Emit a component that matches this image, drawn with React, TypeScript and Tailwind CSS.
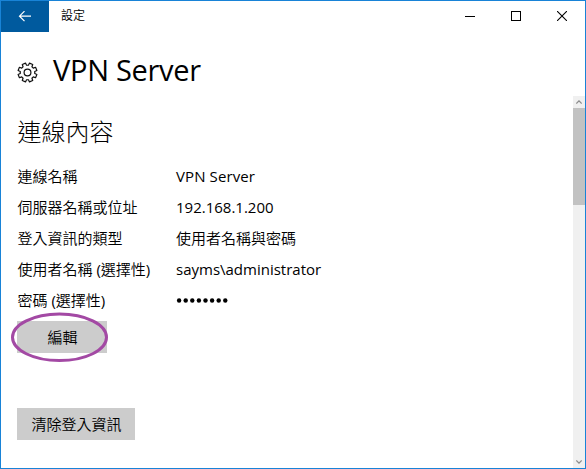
import React from "react";

const rows = [
  { label: "連線名稱", hint: "", value: "VPN Server", valueClass: "tracking-[0.1px]" },
  { label: "伺服器名稱或位址", hint: "", value: "192.168.1.200", valueClass: "" },
  { label: "登入資訊的類型", hint: "", value: "使用者名稱與密碼", valueClass: "font-[350]" },
  { label: "使用者名稱", hint: "選擇性", value: "sayms\\administrator", valueClass: "" },
];

function Label({ text, hint }: { text: string; hint?: string }) {
  return (
    <dt className="w-[159px] whitespace-nowrap pl-[0.5px] font-[350]">
      {text}
      {hint && (
        <>
          <span className="font-normal"> (</span>
          {hint}
          <span className="font-normal">)</span>
        </>
      )}
    </dt>
  );
}

function GearIcon() {
  const points: string[] = [];
  const teeth = 8;
  for (let i = 0; i < teeth; i++) {
    const base = (i * 360) / teeth;
    const corners: [number, number][] = [
      [-15, 7.3],
      [-10.5, 9.6],
      [10.5, 9.6],
      [15, 7.3],
    ];
    corners.forEach(([offset, radius]) => {
      const angle = ((base + 22.5 + offset) * Math.PI) / 180;
      points.push(`${(10.5 + radius * Math.cos(angle)).toFixed(2)},${(10.5 + radius * Math.sin(angle)).toFixed(2)}`);
    });
  }
  return (
    <svg width="21" height="21" viewBox="0 0 21 21" fill="none" stroke="#111" strokeWidth="1.2" strokeLinejoin="round">
      <polygon points={points.join(" ")} />
      <circle cx="10.5" cy="10.5" r="3.4" />
    </svg>
  );
}

function TitleBar() {
  return (
    <header className="flex h-[31px] shrink-0 items-start">
      <button className="flex h-[31px] w-12 items-center justify-center bg-[#005a9e]" aria-label="返回">
        <svg width="14" height="12" viewBox="0 0 14 12" fill="none" stroke="#fff" strokeWidth="1.2">
          <path d="M13 5.2H1.5M6.5 .2L1.5 5.2l5 5" />
        </svg>
      </button>
      <span className="ml-3 flex-1 text-[12px] font-[350] leading-[30px]">設定</span>
      <div className="flex h-[31px]">
        <button className="flex w-[46px] items-center justify-center" aria-label="最小化">
          <svg className="-mt-px" width="10" height="10" viewBox="0 0 10 10" shapeRendering="crispEdges">
            <path d="M0 5h10v1H0z" />
          </svg>
        </button>
        <button className="flex w-[46px] items-center justify-center" aria-label="最大化">
          <svg className="-mt-px" width="10" height="10" viewBox="0 0 10 10" fill="none" stroke="#000" shapeRendering="crispEdges">
            <path d="M.5 .5h9v9h-9z" />
          </svg>
        </button>
        <button className="flex w-[46px] items-center justify-center" aria-label="關閉">
          <svg className="-mt-px" width="10" height="10" viewBox="0 0 10 10" stroke="#000" strokeWidth="1.1">
            <path d="M0 0l10 10M10 0L0 10" />
          </svg>
        </button>
      </div>
    </header>
  );
}

function ScrollBar() {
  return (
    <div className="flex w-3 shrink-0 flex-col bg-[#f0f0f0]">
      <div className="flex h-3 items-center justify-center">
        <svg width="6" height="4" viewBox="0 0 6 4" fill="none" stroke="#8c8c8c" strokeWidth="1.3">
          <path d="M.3 3.5L3 .9l2.7 2.6" />
        </svg>
      </div>
      <div className="h-[97px] bg-[#c2c2c2]" />
      <div className="flex-1" />
      <div className="flex h-3 items-center justify-center">
        <svg width="6" height="4" viewBox="0 0 6 4" fill="none" stroke="#8c8c8c" strokeWidth="1.3">
          <path d="M.3 .5L3 3.1 5.7 .5" />
        </svg>
      </div>
    </div>
  );
}

export default function App() {
  return (
    <div className="flex h-[469px] w-[586px] flex-col overflow-hidden border border-[#1883d7] bg-white font-['Open_Sans','Noto_Sans_CJK_TC',sans-serif] text-black">
      <TitleBar />
      <div className="flex h-[64px] shrink-0 pl-[15.5px]">
        <div className="mt-[29.5px] h-[21px] w-[21px]">
          <GearIcon />
        </div>
        <h1 className="ml-[15.5px] mt-[18px] whitespace-nowrap font-['Open_Sans'] text-[29px] font-normal leading-10 tracking-[-0.3px]">
          VPN Server
        </h1>
      </div>
      <div className="flex min-h-0 flex-1">
        <main className="flex-1 pl-4">
          <h2 className="mt-[20px] pl-[0.5px] text-[24px] font-light leading-8">連線內容</h2>
          <dl className="mt-[13px] text-[15px] leading-[31px]">
            {rows.map((row) => (
              <div key={row.label} className="flex h-[31px]">
                <Label text={row.label} hint={row.hint} />
                <dd className={row.valueClass}>{row.value}</dd>
              </div>
            ))}
            <div className="flex h-[31px]">
              <Label text="密碼" hint="選擇性" />
              <dd className="flex items-center" aria-label="密碼">
                <svg width="54" height="7" viewBox="0 0 54 7">
                  {Array.from({ length: 8 }, (_, i) => (
                    <circle key={i} cx={3.1 + i * 6.6} cy="3.5" r="2.2" />
                  ))}
                </svg>
              </dd>
            </div>
          </dl>
          <div className="relative mt-[5px] h-8 w-[90px]">
            <button className="block h-8 w-[90px] bg-[#ccc] pl-px text-[15px] font-[350] leading-8">編輯</button>
            <svg className="pointer-events-none absolute -left-[6px] -top-[9px]" width="98" height="51" viewBox="0 0 98 51" fill="none">
              <ellipse cx="48.5" cy="25.3" rx="47" ry="23.3" stroke="#a349a4" strokeWidth="3" />
            </svg>
          </div>
          <button className="mt-[55px] block h-8 w-[118px] bg-[#ccc] pl-px text-[15px] font-[350] leading-8">清除登入資訊</button>
        </main>
        <ScrollBar />
      </div>
    </div>
  );
}
